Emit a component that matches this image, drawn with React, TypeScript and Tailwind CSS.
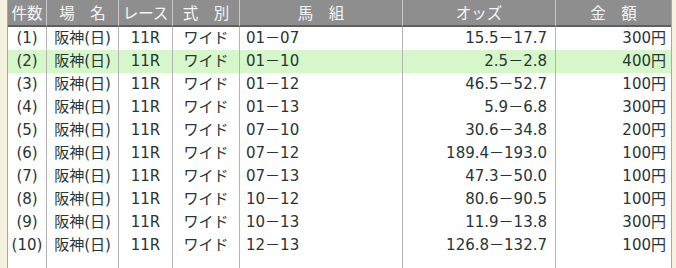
const rows = [
  ['(1)', '01－07', '15.5－17.7', '300円'],
  ['(2)', '01－10', '2.5－2.8', '400円'],
  ['(3)', '01－12', '46.5－52.7', '100円'],
  ['(4)', '01－13', '5.9－6.8', '300円'],
  ['(5)', '07－10', '30.6－34.8', '200円'],
  ['(6)', '07－12', '189.4－193.0', '100円'],
  ['(7)', '07－13', '47.3－50.0', '100円'],
  ['(8)', '10－12', '80.6－90.5', '100円'],
  ['(9)', '10－13', '11.9－13.8', '300円'],
  ['(10)', '12－13', '126.8－132.7', '100円'],
];

const th =
  'h-[27px] p-0 font-normal text-[#f5f5f5] border-b-2 border-b-[#5f5f5f] border-l border-l-[#c9c9c9] first:border-l-0';
const td = 'h-[23px] p-0 border-l border-[#b4b4b4] first:border-l-0 whitespace-nowrap';

export default function App() {
  return (
    <div
      className="w-[676px] h-[268px] bg-[#f6f2df] pl-[7px] pr-[4px] overflow-hidden"
      style={{ fontFamily: '"DejaVu Sans", "Noto Sans CJK JP", sans-serif' }}
    >
      <div className="h-full bg-white border-l border-r border-[#a8a8a8]">
        <table className="w-full h-full border-separate border-spacing-0 table-fixed text-[15px] leading-none text-[#263636]">
          <colgroup>
            <col className="w-[38px]" />
            <col className="w-[72px]" />
            <col className="w-[54px]" />
            <col className="w-[67px]" />
            <col className="w-[163px]" />
            <col className="w-[153px]" />
            <col />
          </colgroup>
          <thead>
            <tr
              className="bg-[#8e8e8e] text-[15.5px]"
              style={{ fontFamily: '"Noto Sans CJK JP", sans-serif' }}
            >
              <th className={`${th} text-center`}>件数</th>
              <th className={`${th} text-center`}>場　名</th>
              <th className={`${th} text-center`}>レース</th>
              <th className={`${th} text-center`}>式　別</th>
              <th className={`${th} text-center`}>馬　組</th>
              <th className={`${th} text-center`}>オッズ</th>
              <th className={`${th} text-center`}>金　額</th>
            </tr>
          </thead>
          <tbody>
            {rows.map(([no, kumi, odds, kin], i) => (
              <tr key={no} className={i === 1 ? 'bg-[#d6f7c9]' : ''}>
                <td className={`${td} text-center`}>{no}</td>
                <td className={`${td} text-center`}>阪神(日)</td>
                <td className={`${td} text-center`}>11R</td>
                <td className={`${td} text-center`}>ワイド</td>
                <td className={`${td} pl-[6px]`}>{kumi}</td>
                <td className={`${td} text-right pr-[8px]`}>{odds}</td>
                <td className={`${td} text-right pr-[5px]`}>{kin}</td>
              </tr>
            ))}
            <tr>
              <td className="p-0 border-l border-[#b4b4b4] first:border-l-0"></td>
              <td className="p-0 border-l border-[#b4b4b4]"></td>
              <td className="p-0 border-l border-[#b4b4b4]"></td>
              <td className="p-0 border-l border-[#b4b4b4]"></td>
              <td className="p-0 border-l border-[#b4b4b4]"></td>
              <td className="p-0 border-l border-[#b4b4b4]"></td>
              <td className="p-0 border-l border-[#b4b4b4]"></td>
            </tr>
          </tbody>
        </table>
      </div>
    </div>
  );
}
